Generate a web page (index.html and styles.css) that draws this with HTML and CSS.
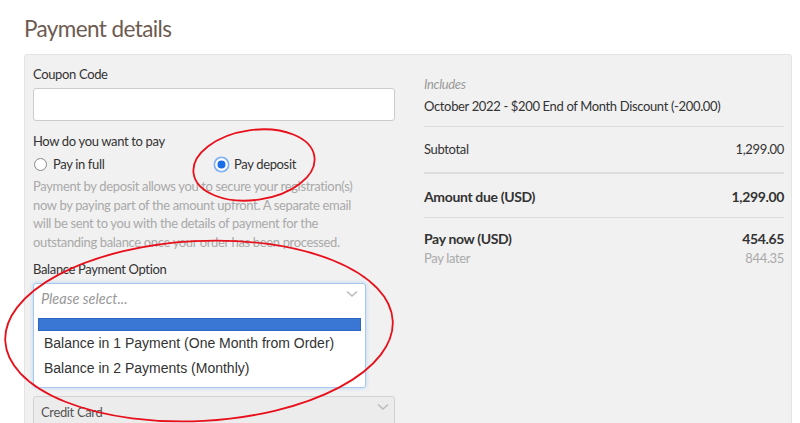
FILE: index.html
```html
<!doctype html>
<html lang="en">
<head>
<meta charset="UTF-8">
<title>Payment details</title>
<link rel="stylesheet" href="styles.css">
</head>
<body>
	<h1 class="title">Payment details</h1>
	<div class="panel">
		<div class="leftcol">
			<div class="label">Coupon Code</div>
			<div class="input"></div>
			<div class="label how">How do you want to pay</div>
			<div class="radios">
				<div class="radio"><span class="dot"></span>Pay in full</div>
				<div class="radio on"><span class="dot"></span>Pay deposit</div>
			</div>
			<p class="hint">Payment by deposit allows you to secure your registration(s) now by paying part of the amount upfront. A separate email will be sent to you with the details of payment for the outstanding balance once your order has been processed.</p>
			<div class="label bal">Balance Payment Option</div>
			<div class="select open">
				<div class="placeholder">Please select...</div>
				<svg class="chev" width="12" height="8" viewBox="0 0 12 8"><polyline points="1,1.5 6,6 11,1.5" fill="none" stroke="#bbb" stroke-width="1.6"/></svg>
				<ul class="options">
					<li class="sel">&nbsp;</li>
					<li>Balance in 1 Payment (One Month from Order)</li>
					<li>Balance in 2 Payments (Monthly)</li>
				</ul>
			</div>
			<div class="select card">
				<div class="value">Credit Card</div>
				<svg class="chev" width="12" height="8" viewBox="0 0 12 8"><polyline points="1,1.5 6,6 11,1.5" fill="none" stroke="#bbb" stroke-width="1.6"/></svg>
			</div>
		</div>
		<div class="rightcol">
			<div class="inc">Includes</div>
			<div class="discount">October 2022 - $200 End of Month Discount (-200.00)</div>
			<div class="row sub"><span>Subtotal</span><span>1,299.00</span></div>
			<div class="row due"><span>Amount due (USD)</span><span>1,299.00</span></div>
			<div class="row now"><span>Pay now (USD)</span><span>454.65</span></div>
			<div class="row later"><span>Pay later</span><span>844.35</span></div>
		</div>
	</div>
	<svg class="marks" width="800" height="423" viewBox="0 0 800 423">
		<ellipse cx="254" cy="165" rx="61" ry="35" fill="none" stroke="#e8101a" stroke-width="1.8" transform="rotate(-8 254 165)"/>
		<ellipse cx="199" cy="331" rx="194" ry="90" fill="none" stroke="#e8101a" stroke-width="1.8" transform="rotate(-3 199 331)"/>
	</svg>
</body>
</html>
```

FILE: styles.css
```css
* {margin:0;padding:0;box-sizing:border-box;}
body{background:#fff;font-family:"Lato","Open Sans",sans-serif;font-size:13px;letter-spacing:-0.35px;color:#333;overflow:hidden;height:423px;position:relative;}
ul,li{list-style:none;}

.title{font-weight:400;font-size:22.5px;color:#6d5b51;margin:14px 0 0 24px;line-height:30px;letter-spacing:-0.6px;}

.panel{display:flex;margin:10px 0 0 24px;width:768px;height:380px;background:#f1f1f1;border:1px solid #e4e4e4;border-radius:3px;padding:0 7px 0 8px;}
.leftcol{width:362px;}
.rightcol{width:361px;margin-left:29px;padding-top:20px;}

.label{line-height:18px;margin-top:10px;color:#333;}
.input{height:33px;margin-top:5px;background:#fff;border:1px solid #ccc;border-radius:3px;}
.label.how{margin-top:11px;}
.radios{display:flex;margin-top:5px;line-height:18px;}
.radio{display:flex;align-items:center;width:186px;padding-left:1px;}
.dot{width:13px;height:13px;border-radius:50%;border:1px solid #888;background:#fff;margin-right:6px;}
.radio.on .dot{border:none;background:#1a6fe8;box-shadow:inset 0 0 0 2.5px #fff,0 0 0 1.5px #7fb0f2;}
.hint{color:#a9a9a9;line-height:18.7px;margin-top:4px;width:326px;}
.label.bal{margin-top:8px;}

.select{position:relative;border-radius:3px;}
.select .chev{position:absolute;top:6px;right:7px;}
.select.open{width:333px;margin-top:5px;background:#fff;border:1px solid #a6c8ee;box-shadow:0 0 4px #b8d4f2;}
.placeholder{font-style:italic;font-size:14.5px;letter-spacing:0;color:#999;height:32px;line-height:30px;padding-left:7px;}
.options{padding:2px 4px 6px;font-family:"Liberation Sans",Arial,sans-serif;font-size:14px;letter-spacing:0;color:#333;}
.options li{line-height:25px;padding-left:6px;}
.options li.sel{background:#3a76d4;height:13px;line-height:13px;border:1px solid #2d66c4;margin-bottom:0;}
.select.card{width:362px;height:34px;margin-top:8px;background:#ececec;border:1px solid #d2d2d2;}
.select.card .chev{right:5px;top:6px;}
.value{line-height:30px;padding-left:7px;color:#555;}

.inc{font-style:italic;color:#999;line-height:18px;}
.discount{line-height:18px;margin-top:4px;padding-bottom:11px;border-bottom:1px solid #ddd;}
.row{display:flex;justify-content:space-between;}
.row.sub{line-height:18px;padding:13px 0 14px;border-bottom:2px solid #ddd;}
.row.due{font-weight:700;font-size:14px;line-height:20px;padding:13px 0 10px;border-bottom:1px solid #ddd;}
.row.now{font-weight:700;font-size:14px;line-height:20px;margin-top:11px;}
.row.later{color:#aaa;line-height:18px;margin-top:0;}

.marks{position:absolute;left:0;top:0;}
```
